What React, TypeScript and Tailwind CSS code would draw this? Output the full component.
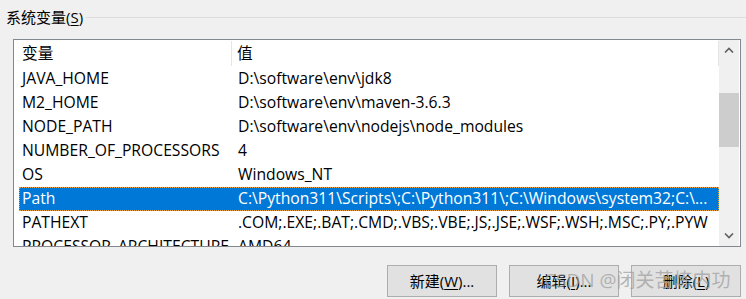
import React from 'react'

const rows = [
    { name: 'JAVA_HOME', value: 'D:\\software\\env\\jdk8' },
    { name: 'M2_HOME', value: 'D:\\software\\env\\maven-3.6.3' },
    { name: 'NODE_PATH', value: 'D:\\software\\env\\nodejs\\node_modules' },
    { name: 'NUMBER_OF_PROCESSORS', value: '4' },
    { name: 'OS', value: 'Windows_NT' },
    { name: 'Path', value: 'C:\\Python311\\Scripts\\;C:\\Python311\\;C:\\Windows\\system32;C:\\...', selected: true },
    { name: 'PATHEXT', value: '.COM;.EXE;.BAT;.CMD;.VBS;.VBE;.JS;.JSE;.WSF;.WSH;.MSC;.PY;.PYW' },
    { name: 'PROCESSOR_ARCHITECTURE', value: 'AMD64' },
]

const font = { fontFamily: '"Open Sans", "Noto Sans CJK SC", sans-serif' }

function Chevron({ up }: { up?: boolean }) {
    return (
        <svg width="10" height="6" viewBox="0 0 10 6">
            <path
                d={up ? 'M1 5.5 L5 1.5 L9 5.5' : 'M1 0.5 L5 4.5 L9 0.5'}
                fill="none"
                stroke="#606060"
                strokeWidth="1.6"
            />
        </svg>
    )
}

function Button({ label, hot, tail }: { label: string; hot: string; tail: string }) {
    return (
        <button className="flex h-[32px] w-[110px] items-center justify-center border border-[#adadad] bg-[#e1e1e1] text-[15px] text-black">
            {label}(<span className="underline underline-offset-2">{hot}</span>){tail}
        </button>
    )
}

export default function App() {
    return (
        <div className="relative h-[299px] w-[746px] overflow-hidden bg-[#f0f0f0] text-black" style={font}>
            <div className="flex h-[34px] items-center">
                <span className="pl-[6px] pr-[3px] text-[15px] leading-none">
                    系统变量(<span className="underline underline-offset-2">S</span>)
                </span>
                <div className="h-px flex-1 bg-[#dcdcdc]" />
            </div>

            <div className="ml-[13px] mt-[5px] flex h-[208px] w-[728px] border border-[#828790] bg-white">
                <div className="flex-1 overflow-hidden">
                    <div className="flex h-[27px] items-center text-[15.7px]">
                        <div className="flex h-[25px] w-[218px] items-center border-r border-[#e5e5e5] pl-[8px]">变量</div>
                        <div className="flex h-[25px] flex-1 items-center border-r border-[#e5e5e5] pl-[5px]">值</div>
                    </div>
                    {rows.map((r) => (
                        <div
                            key={r.name}
                            className={`ml-[5px] flex h-[24px] items-center whitespace-nowrap text-[15.7px] ${
                                r.selected ? 'bg-[#0078d7] text-white outline-1 outline-dotted outline-offset-[-1px] outline-[#e8a040]' : ''
                            }`}
                        >
                            <div className="w-[213px] shrink-0 pl-[3px]">{r.name}</div>
                            <div className="pl-[6px]">{r.value}</div>
                        </div>
                    ))}
                </div>
                <div className="mr-px flex w-[20px] flex-col items-center bg-[#f0f0f0]">
                    <div className="flex h-[20px] items-center justify-center">
                        <Chevron up />
                    </div>
                    <div className="mt-[33px] h-[54px] w-full bg-[#cdcdcd]" />
                    <div className="flex-1" />
                    <div className="flex h-[20px] items-center justify-center">
                        <Chevron />
                    </div>
                </div>
            </div>

            <div className="mt-[18px] flex justify-end gap-[12px] pr-[5px]">
                <Button label="新建" hot="W" tail="..." />
                <Button label="编辑" hot="I" tail="..." />
                <Button label="删除" hot="L" tail="" />
            </div>

            <div className="pointer-events-none absolute left-[544px] top-[266px] text-[19px] text-[#a0a0a0]/75">
                CSDN @闭关苦炼内功
            </div>
        </div>
    )
}
